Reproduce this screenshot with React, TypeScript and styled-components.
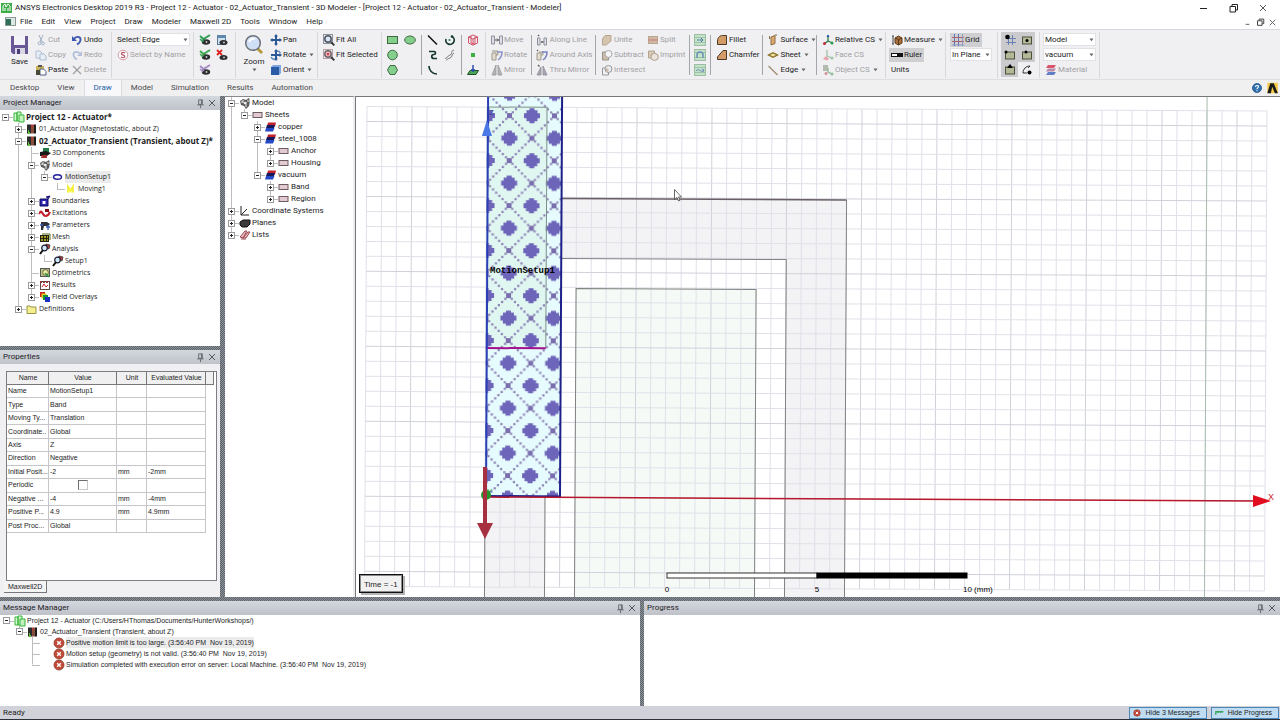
import React from "react";
import styled, { createGlobalStyle, css } from "styled-components";

const ui = `Roboto, "Liberation Sans", sans-serif`;
const classic = `"Liberation Sans", Arial, sans-serif`;
const treeFont = `"Open Sans", "Noto Sans", sans-serif`;

const Global = createGlobalStyle`
  * { box-sizing: border-box; }
  body { margin: 0; background: #fff; color: #1c1c1e; font: 8px/12px ${ui}; }
  button, select, input { font: inherit; color: inherit; margin: 0; }
  button { background: none; border: 0; padding: 0; text-align: left; white-space: nowrap; }
  svg { display: block; flex: none; }
`;

/* ---------- icons, all on a 12 x 12 canvas ---------- */

const grey = "#a0a0a4";
const tan = "#c9b9a6";

const check = (c: string) => (
  <>
    <path d="M1 2l3.500 3L11 1" fill="none" stroke={c} strokeWidth="2" />
    <ellipse cx="7" cy="8" rx="4.200" ry="2.700" fill="#2e2e30" />
    <path d="M1 5l3 3M3.500 5L5 7" stroke={c} strokeWidth="1.200" />
    <circle cx="7.500" cy="8" r=".9" fill="#cfd3d6" />
  </>
);
const snap = (dot: React.ReactNode) => (
  <>
    <rect x="1.5" y="3" width="9" height="7" fill="#b4b896" stroke="#4c4f3c" />
    {dot}
  </>
);
const tile = (inner: React.ReactNode) => (
  <>
    <rect x=".5" y=".5" width="11" height="11" fill="#c3e2c8" stroke="#9cbfa4" />
    <path d="M1 3.500h10M1 8.500h10" stroke="#9dc4a8" strokeWidth="1" />
    {inner}
  </>
);

const icons: Record<string, React.ReactNode> = {
  app: (
    <>
      <rect x="0" y="1" width="11" height="10" fill="#3fae49" />
      <path d="M2 9V4l2-2 1 3 2-3 2 2v5M4 9V6M7 9V6" stroke="#fff" fill="none" />
    </>
  ),
  doc: (
    <>
      <rect x=".5" y="1.500" width="10" height="8" fill="#dfe9e4" stroke="#8a9792" />
      <rect x="1" y="3" width="5" height="6" fill="#2f6e58" />
    </>
  ),
  cut: <path d="M4 1l3 7M8 1L5 8M4.500 8a1.400 1.400 0 1 0 0 2.800 1.400 1.400 0 0 0 0-2.800M8 8a1.400 1.400 0 1 0 0 2.800A1.400 1.400 0 0 0 8 8" stroke="#9fb0c6" fill="none" />,
  copy: (
    <>
      <path d="M1 2h4l2 2v5H1z" fill="#e8eef6" stroke="#aebdd0" />
      <path d="M5 5h4l2 2v4H5z" fill="#e8eef6" stroke="#aebdd0" />
    </>
  ),
  paste: (
    <>
      <rect x="1" y="2" width="8" height="9" fill="#c9b45a" />
      <rect x="3" y="1" width="4" height="2" fill="#555" />
      <path d="M5 5h3.500L11 7.500V11H5z" fill="#fff" stroke="#4d5f80" />
      <rect x="1" y="6" width="4" height="5" fill="#4a4a3a" />
    </>
  ),
  undo: (
    <>
      <path d="M1 2v5h5z" fill="#3c57b0" />
      <path d="M3 5C5 1.500 10 2.500 9.500 6c-.2 2-1.500 3.500-3.500 4.500" fill="none" stroke="#3c57b0" strokeWidth="1.800" />
    </>
  ),
  redo: (
    <>
      <path d="M11 2v5H6z" fill="#b3bfda" />
      <path d="M9 5C7 1.500 2 2.500 2.500 6c.2 2 1.500 3.500 3.500 4.500" fill="none" stroke="#b3bfda" strokeWidth="1.800" />
    </>
  ),
  del: <path d="M2 2l8 8M10 2l-8 8" stroke={grey} strokeWidth="1.300" />,
  byName: (
    <>
      <circle cx="6" cy="6" r="4.800" fill="#fff" stroke="#d49aa4" />
      <path d="M8 4.200C7 3 4.200 3.300 4.400 4.800S8 6 7.800 7.500 5 9 4 7.800" fill="none" stroke="#b85c6c" strokeWidth="1.300" />
    </>
  ),
  chkA: check("#2f9e52"),
  chkB: check("#39a84f"),
  chkC: check("#a68cc4"),
  eyeBox: (
    <>
      <rect x="1.500" y="1.500" width="8" height="9" fill="#cfe0ef" stroke="#5b7894" />
      <rect x="1" y="1" width="9" height="3" fill="#5f86ac" />
      <ellipse cx="7.500" cy="8.500" rx="4" ry="2.500" fill="#2e2e30" />
      <circle cx="8" cy="8.500" r=".9" fill="#cfd3d6" />
    </>
  ),
  eyeX: (
    <>
      <path d="M1 1l5 5M6 1L1 6" stroke="#d22" strokeWidth="1.800" />
      <ellipse cx="7.500" cy="8.500" rx="4" ry="2.500" fill="#2e2e30" />
      <circle cx="8" cy="8.500" r=".9" fill="#cfd3d6" />
    </>
  ),
  pan: <path d="M6 0l2 2.500H7V5h2.500V4L12 6 9.500 8V7H7v2.500h1L6 12 4 9.500h1V7H2.500v1L0 6l2.500-2v1H5V2.500H4z" fill="#2b5896" />,
  rotate3: (
    <>
      <path d="M6 0l2 2.500H7V5h2.500V4L12 6 9.500 8V7H7v2.500h1L6 12 4 9.500h1V7H1V5h4V2.500H4z" fill="#2b5896" />
      <path d="M1 8c1 2 3 2.500 4 2.500M7 2c2 0 3 1 3.500 2" stroke="#5d87bd" strokeWidth="1.400" fill="none" />
    </>
  ),
  orient: (
    <>
      <path d="M1 3l2-2h8v8l-2 2H1z" fill="#7ea6dc" />
      <rect x="1" y="3" width="8" height="8" fill="#2c5ca8" />
    </>
  ),
  fitAll: (
    <>
      <rect x=".5" y=".5" width="9" height="9" fill="none" stroke="#8c929c" />
      <circle cx="5" cy="5" r="3.200" fill="#d8e6f5" stroke="#4b5563" strokeWidth="1.500" />
      <path d="M8 8l3.300 3.300" stroke="#333" strokeWidth="1.800" />
    </>
  ),
  fitSel: (
    <>
      <rect x=".5" y=".5" width="9" height="9" fill="none" stroke="#b9a0a4" />
      <circle cx="5" cy="5" r="3.200" fill="#f6cbd0" stroke="#6f6468" strokeWidth="1.500" />
      <circle cx="5" cy="5" r="1.500" fill="#d04a5c" />
      <path d="M8 8l3.300 3.300" stroke="#333" strokeWidth="1.800" />
    </>
  ),
  rect: <rect x=".500" y="2.500" width="10" height="7" fill="#85cf8c" stroke="#3f6b44" />,
  oval: <ellipse cx="6" cy="6" rx="5.300" ry="4" fill="#85cf8c" stroke="#3f6b44" />,
  circ: <circle cx="5.500" cy="6" r="4.800" fill="#85cf8c" stroke="#3f6b44" />,
  hex: <path d="M3 1.500h5L10.500 6 8 10.500H3L.5 6z" fill="#85cf8c" stroke="#3f6b44" />,
  line: <path d="M1 1.500l9 9" stroke="#111" strokeWidth="1.500" />,
  spin: (
    <>
      <path d="M2 5a4.200 4.200 0 1 0 6-2.500" stroke="#123a2c" strokeWidth="1.700" fill="none" />
      <circle cx="5.500" cy="6" r="1.100" fill="#2f7d5b" />
      <circle cx="8" cy="2.500" r="1.300" fill="#123a2c" />
    </>
  ),
  spline: <path d="M2 2.500h5c2 0 2 3 0 3C4 5.500 4 9.500 7 9.500h3" stroke="#16382e" strokeWidth="1.700" fill="none" />,
  curvePen: <path d="M10 1C6 2 9 5 6 6S4 9 1 9.500M10 4C7 5 9 8 6 9s-3 2-4 2" stroke="#777" fill="none" />,
  arc: <path d="M2 2c0 4 3 8 8 8" stroke="#16382e" strokeWidth="1.700" fill="none" />,
  cube: <path d="M6 1l4.500 2v6L6 11.200 1.500 9V3zM1.500 3L6 5l4.500-2M6 5v6M4 2v7l4 1V2.500" stroke="#d2546a" fill="none" />,
  dot: <rect x="4" y="4" width="4" height="4" fill="#3cae45" />,
  plane: (
    <>
      <path d="M3 6.500h8.500L9 10.500H.500z" fill="#4aa755" stroke="#1e4f26" />
      <path d="M6 1v7M4 6h4" stroke="#2545a8" strokeWidth="1.400" />
    </>
  ),
  move: (
    <>
      <path d="M.5 2v8h3V2zM8.500 2v8h3V2z" fill="#dfe0e6" stroke="#8d8f9c" />
      <path d="M4 6h4M6 4.500L7.500 6 6 7.500" stroke="#555" fill="none" />
    </>
  ),
  rot: (
    <>
      <path d="M1 4v7h4V4zM1 2h6v4H5" fill="#e3dccf" stroke="#a09a90" />
      <path d="M6 3h5c0 4-1 6-4 8" fill="none" stroke="#8c90c6" strokeWidth="1.500" />
    </>
  ),
  mirror: <path d="M5 1v10H1zM7 1l4 10H7z" fill="#b4b4ba" stroke="#97979d" strokeWidth=".8" />,
  along: (
    <>
      <path d="M1.500 4v7h2.500V4zM8 4v7h2.500V4z" fill="#dfe0ea" stroke="#8d8f9a" />
      <path d="M2 1l1 1M5 8h2.500" stroke="#555" strokeWidth="1.300" />
    </>
  ),
  around: (
    <>
      <path d="M1 4v7h4V4zM3 3h4v3H5" fill="#e3dccf" stroke="#a09a90" />
      <path d="M6 3h5c0 4-1 6-4 8" fill="none" stroke="#7a80c2" strokeWidth="1.500" />
      <path d="M1 1l1 1" stroke="#555" strokeWidth="1.300" />
    </>
  ),
  thru: (
    <>
      <path d="M5 3v8H1zM7 2l4 9H7z" fill="#a8a8b2" stroke="#8d8d98" strokeWidth=".8" />
      <path d="M2 1l1.500 1.500" stroke="#555" strokeWidth="1.300" />
    </>
  ),
  unite: <path d="M4 1.500h6V7L7 9.500 5 11H1.500V5z" fill="#d6c5ae" stroke="#b5a58f" />,
  subtract: (
    <>
      <path d="M1.500 3h6v8h-6z" fill="#cfbda7" stroke="#97908a" />
      <circle cx="7.500" cy="5" r="3.500" fill="#f4f4f6" stroke="#a7a7ab" />
    </>
  ),
  intersect: (
    <>
      <path d="M1.500 4h6v7h-6z" fill="#f1f1f3" stroke="#97979b" />
      <circle cx="7.500" cy="5" r="3.500" fill="#eeeef0" stroke="#97979b" />
      <path d="M5 4.500h2.500v3H5z" fill={tan} />
    </>
  ),
  split: (
    <>
      <rect x="1.500" y="2.500" width="9" height="7" fill="#d1b9a0" stroke="#b9a590" />
      <path d="M1 6h10" stroke="#c88f8f" strokeWidth="1.500" />
    </>
  ),
  imprint: (
    <>
      <path d="M1.500 2h6v7h-6z" fill="#d9c9b4" stroke="#b3a694" />
      <path d="M4 6l3.500-2L11 6v4l-3.500 1.500L4 10z" fill="#ebe4da" stroke="#a89d90" />
    </>
  ),
  tileA: tile(<path d="M3 6h6M7 4l2 2-2 2" stroke="#4d79a8" fill="none" />),
  tileB: tile(<path d="M3 9V6a3 3 0 0 1 6 0v3" stroke="#6c8fb8" fill="none" strokeWidth="1.500" />),
  tileC: tile(<path d="M2 7c3-4 5 3 8-1M8 5l2 1-1 2" stroke="#6c8fb8" fill="none" />),
  fillet: <path d="M1.500 10.500V7c0-4 3-5.500 5-5.500h4v9z" fill="#d39c66" stroke="#4b3a2a" />,
  chamfer: <path d="M1.500 10.500V8L7 1.500h3.500v9z" fill="#d39c66" stroke="#4b3a2a" />,
  surface: (
    <>
      <path d="M4 3l4-1.500v8L4 11z" fill="#d9a96f" stroke="#8b6a45" />
      <path d="M2.500 2v3M8 1h2" stroke="#8b6a45" />
    </>
  ),
  sheet: (
    <>
      <path d="M0 6l6-3 6 3-6 3z" fill="#8d7328" />
      <path d="M3 6l3-1.400L9 6 6 7.400z" fill="#efe2a4" />
    </>
  ),
  edge: <path d="M1.500 2l9 9" stroke="#a08a70" strokeWidth="1.200" />,
  cs: (
    <>
      <path d="M6 1v6M6 7L2 10M6 7l4.500 2" stroke="#2b7a48" strokeWidth="1.300" fill="none" />
      <path d="M4.500 3L6 .5 7.500 3z" fill="#2456b8" />
      <circle cx="2.500" cy="9.500" r="1.500" fill="#c52a3a" />
      <circle cx="10" cy="9" r="1.500" fill="#2c9a49" />
    </>
  ),
  faceCs: (
    <>
      <path d="M5 1v6M5 7l5 2" stroke="#9dbfa6" strokeWidth="1.300" fill="none" />
      <path d="M1 10l3-3 3 3-2 1.500z" fill="#e5a2a8" />
      <circle cx="10" cy="9" r="1.500" fill="#9dc5a8" />
    </>
  ),
  objCs: (
    <>
      <rect x="1" y="1" width="5" height="6" fill="#b4bcae" />
      <path d="M6 4v4l4 2" stroke="#8fb99a" strokeWidth="1.300" fill="none" />
      <circle cx="4" cy="9.500" r="1.500" fill="#d98f98" />
      <circle cx="10" cy="10" r="1.500" fill="#8fbf9c" />
    </>
  ),
  measure: (
    <>
      <path d="M1 2h2M1 10h2M2 2v8" stroke="#444" />
      <path d="M4 4l3.500-2L11 4v5l-3.500 2L4 9z" fill="#a9713c" stroke="#5a3a1d" />
      <path d="M4 4l3.500 1.500L11 4M7.500 5.500V11" stroke="#5a3a1d" fill="none" />
    </>
  ),
  ruler: (
    <>
      <rect x=".500" y="4.500" width="11" height="3" fill="#fff" stroke="#111" />
      <rect x="6" y="4" width="6" height="4" fill="#111" />
    </>
  ),
  grid: (
    <>
      <path d="M2.500 0v12M6.500 0v12" stroke="#5a76b8" />
      <path d="M0 3.500h12M0 7.500h12" stroke="#b0616c" />
      <path d="M10.500 0v12M0 11h12" stroke="#8190c4" strokeWidth=".8" />
    </>
  ),
  snapGrid: (
    <>
      <path d="M4.500 1v10M8.500 1v10M2 4.500h10M2 8.500h10" stroke="#6b7fb5" />
      <circle cx="3.500" cy="3" r="2.300" fill="#000" />
    </>
  ),
  snapMid: snap(<circle cx="6" cy="6.500" r="1.500" fill="#000" />),
  snapVertex: snap(<circle cx="2" cy="3" r="1.500" fill="#000" />),
  snapEdge: snap(<circle cx="5" cy="3" r="1.500" fill="#000" />),
  snapFace: snap(<path d="M6 0l3 4H3z" fill="#000" />),
  snapArc: (
    <>
      <path d="M2 9c0-4 3-7 7-7L7 4M2 9h4" fill="none" stroke="#333" />
      <circle cx="8.500" cy="8.500" r="2" fill="#000" />
    </>
  ),
  material: (
    <>
      <path d="M3 1h8L9 4H1z" fill="#d9566a" />
      <path d="M3 4.500h8l-2 3H1z" fill="#b98aa8" />
      <path d="M3 8h8l-2 3H1z" fill="#5f7fc9" />
    </>
  ),
  project: (
    <>
      <path d="M1 2h3v8H1zM4 1h4v9H4z" fill="#d5f7cf" stroke="#35b43b" />
      <path d="M6 4h5v7H6z" fill="#c4f2bf" stroke="#35b43b" />
    </>
  ),
  design: (
    <>
      <rect x="1" y="1.500" width="4" height="9" fill="#2c2c2c" />
      <rect x="5" y="1.500" width="3" height="9" fill="#8a4f3c" />
      <rect x="8" y="1.500" width="2" height="9" fill="#1c1c1c" />
      <path d="M2 8h1M2 10h2" stroke="#59c43c" strokeWidth="2" />
      <path d="M5 3h2" stroke="#c33" strokeWidth="1.500" />
    </>
  ),
  components: (
    <>
      <path d="M4 1h6v4H4z" fill="#1e7a48" />
      <path d="M1 5l6-1 5 2-4 3H1z" fill="#1a1a1a" />
      <path d="M3 8h5v3H2z" fill="#a13030" />
    </>
  ),
  gear: (
    <>
      <path d="M1 4l3-2 3 1 3-2 1 3-1 5-3 3-2-3-3-1z" fill="#5c5c5c" />
      <path d="M4 3v3M7 5v5M2 5h2M8 4h3" stroke="#eee" />
      <circle cx="6" cy="6" r="1.300" fill="#eee" />
    </>
  ),
  motion: <ellipse cx="5.500" cy="6" rx="4" ry="2.300" fill="#fff" stroke="#1f1f9a" strokeWidth="1.400" />,
  moving: <path d="M3 9.500V3.500l2.500 4L8 3.500v6" fill="#ffff70" stroke="#f4f03c" strokeWidth="1.800" />,
  boundary: (
    <>
      <path d="M1 4h8v7H1zM9 4l2-3-4 1" fill="#2b22b0" stroke="#120c60" />
      <rect x="3.500" y="6" width="3" height="3" fill="#fff" />
    </>
  ),
  excite: (
    <>
      <path d="M0 7c2-4 3-2 4 0s4 4 7-2" fill="none" stroke="#c4202e" strokeWidth="2.200" />
      <path d="M6 2h4v3H6z" fill="#7a1018" />
    </>
  ),
  params: (
    <>
      <path d="M2 3h6l3 2-2 2H5L4 11H2z" fill="#30323a" />
      <path d="M1 6h3M7 8h4M9 6v5" stroke="#3a5fb8" strokeWidth="1.300" />
    </>
  ),
  mesh: (
    <>
      <rect x="1" y="4" width="9" height="7" fill="#22230e" />
      <path d="M2 6h7M2 9h7" stroke="#d4c92a" strokeWidth="1.500" strokeDasharray="2 1" />
      <path d="M3 3h8v6" stroke="#556b1a" fill="none" />
    </>
  ),
  analysis: (
    <>
      <path d="M7 1l4 1-1 4-4-2z" fill="#b43c3c" stroke="#333" strokeWidth=".8" />
      <circle cx="5.500" cy="5" r="2.800" fill="#cfe8f5" stroke="#1c1c2e" strokeWidth="1.200" />
      <path d="M4 7l-3 4" stroke="#111" strokeWidth="2" />
    </>
  ),
  optim: (
    <>
      <rect x="1.500" y="1.500" width="9" height="8" fill="#b8c27a" stroke="#555" />
      <circle cx="6.500" cy="5.500" r="2.800" fill="#f3f0a0" stroke="#665" />
      <path d="M6 6l4 4" stroke="#2b8f45" strokeWidth="1.500" />
    </>
  ),
  results: (
    <>
      <rect x="1.500" y="2.500" width="9" height="8" fill="#fff" stroke="#5f4a4a" />
      <path d="M1 3h10" stroke="#8f3a3a" strokeWidth="2" strokeDasharray="2 1" />
      <path d="M3 8l2-3 2 3 2-2" stroke="#c22" fill="none" />
    </>
  ),
  overlays: (
    <>
      <rect x="1" y="1" width="5" height="5" fill="#c22" />
      <rect x="2.500" y="2.500" width="5" height="5" fill="#e0d020" />
      <rect x="4" y="4" width="5" height="5" fill="#18923a" />
      <rect x="6" y="6" width="5" height="5" fill="#1c2ec0" />
    </>
  ),
  folder: <path d="M1 3h3l1 1h5v6.500H1z" fill="#f3ee8e" stroke="#9a9446" />,
  sheetItem: <rect x="1" y="3.500" width="9" height="5" fill="#e3c9d0" stroke="#6b5a60" />,
  matItem: (
    <>
      <path d="M3 1.500h8l-1 4H2z" fill="#c3202e" />
      <path d="M2 4h8l-1 3H1z" fill="#16185c" />
      <path d="M1 7h8.500L8 10.500H0z" fill="#2448c8" />
    </>
  ),
  csItem: <path d="M2 1v9h8M2 10l6-6" stroke="#222" fill="none" />,
  planes: <path d="M1 5l3-2h7v4L8 10H3L1 8z" fill="#3c3c3c" stroke="#111" />,
  lists: <path d="M1 8l5-6 2 0-4 7zM4 9l5-6h2L7 9zM2 10h5" fill="#edb8be" stroke="#9b4a55" />,
  error: (
    <>
      <circle cx="6" cy="6" r="5" fill="#c24a38" stroke="#8e3a2c" strokeWidth=".8" />
      <path d="M4.200 4.200l3.600 3.600M7.800 4.200L4.200 7.800" stroke="#fff" strokeWidth="1.400" />
    </>
  ),
  progress: <path d="M1 8V4.500h9M4 4v2M7 4v2" fill="none" stroke="#3aa655" strokeWidth="1.600" />,
  help: (
    <>
      <circle cx="6" cy="6" r="4.500" fill="#2f72b0" stroke="#1f4f80" strokeWidth=".8" />
      <path d="M4.500 5c0-2 3-2 3-.3C7.500 6 6 5.800 6 7.200M6 8.200v1" stroke="#fff" fill="none" strokeWidth="1.100" />
    </>
  ),
  ansys: (
    <>
      <rect x="2" y="1.500" width="9" height="9" fill="#f7c948" />
      <path d="M4.500 2h3l3.500 8.500H8.500L6.200 5l-1.200 5.500H2z" fill="#1b1b1b" />
    </>
  ),
  pin: <path d="M4 2h4v5H4zM7 2v5M2.500 7.500h7M6 8v3" fill="none" stroke="#62666c" />,
  close: <path d="M3 3l6 6M9 3l-6 6" stroke="#55595f" />,
  min: <path d="M3 6.500h7" stroke="#222" />,
  restore: <path d="M3 4.500h5.500V10H3zM5 4V2.500h5.500V8H9" fill="none" stroke="#222" />,
  minSmall: <path d="M4 8h4" stroke="#555" />,
};

const Icon = ({ name, size = 12 }: { name: string; size?: number }) => (
  <svg width={size} height={size} viewBox="0 0 12 12" aria-hidden="true">
    {icons[name]}
  </svg>
);

const Caret = () => (
  <svg width="5" height="4" viewBox="0 0 5 4" aria-hidden="true">
    <path d="M.5.5h4L2.500 3.200z" fill="#666" />
  </svg>
);

/* ---------- window chrome ---------- */

const Window = styled.div`
  display: flex;
  flex-direction: column;
  min-height: 100vh;
  background: #fff;
  overflow: hidden;
`;

const TitleBar = styled.header`
  display: flex;
  align-items: center;
  height: 15px;
  padding: 0 11px 0 1px;
  gap: 2px;
  h1 { flex: 1; margin: 0; font-size: 8px; font-weight: 400; white-space: nowrap; color: #222; }
`;

const WindowButtons = styled.div<{ $gap: number }>`
  display: flex;
  gap: ${(p) => p.$gap}px;
`;

const MenuBar = styled.nav`
  display: flex;
  align-items: center;
  height: 14px;
  padding: 0 2px 0 5px;
  ul { display: flex; flex: 1; gap: 9px; margin: 0 0 0 3px; padding: 0; list-style: none; }
`;

const Ribbon = styled.section`
  display: flex;
  height: 51px;
  padding-top: 2px;
  background: #f0f0f2;
  border-top: 1px solid #d9d9dd;
  border-bottom: 1px solid #dedee1;
`;

const Group = styled.div<{ $w: number; $pad: number }>`
  display: flex;
  flex: none;
  width: ${(p) => p.$w}px;
  height: 46px;
  padding-left: ${(p) => p.$pad}px;
  border-right: 1px solid #d8d8dc;
`;

const Column = styled.div<{ $w?: number }>`
  display: grid;
  flex: none;
  grid-template-rows: repeat(3, 15px);
  align-items: center;
  justify-items: start;
  width: ${(p) => (p.$w ? `${p.$w}px` : "auto")};
`;

const Rule = styled.i`
  width: 1px;
  height: 40px;
  margin: 3px 5px 0 0;
  background: #a5a5ac;
`;

const ToolButton = styled.button<{ $active?: boolean }>`
  display: flex;
  align-items: center;
  gap: 1px;
  height: 14px;
  margin-left: -2px;
  padding: 0 2px;
  line-height: 14px;
  background: ${(p) => (p.$active ? "#cfcfd1" : "none")};
  &:disabled { color: ${grey}; }
  & > span + svg { margin-left: 2px; }
`;

const BigTool = styled.button<{ $w: number }>`
  display: flex;
  flex: none;
  flex-direction: column;
  align-items: center;
  width: ${(p) => p.$w}px;
  padding-top: 2px;
`;

const Field = styled.div`
  display: flex;
  align-items: center;
  label { width: 23px; }
`;

const Picker = styled.span<{ $w: number; $shift?: boolean }>`
  position: relative;
  display: block;
  width: ${(p) => p.$w}px;
  margin-left: ${(p) => (p.$shift ? "-2px" : "0")};
  select {
    appearance: none;
    display: block;
    width: 100%;
    height: 13px;
    padding: 0 1px;
    border: 1px solid #e2e2e6;
    border-radius: 0;
    background: #fff;
    line-height: 11px;
  }
  svg { position: absolute; right: 2px; top: 5px; pointer-events: none; }
`;

const SnapGrid = styled.div`
  display: grid;
  grid-template: repeat(3, 15px) / repeat(2, 17px);
`;

const SnapButton = styled.button<{ $active: boolean }>`
  display: grid;
  place-items: center;
  background: ${(p) => (p.$active ? "#cbcbcd" : "none")};
`;

const TabStrip = styled.div`
  display: flex;
  align-items: center;
  height: 16px;
  padding: 0 1px;
  background: #f0f0f1;
`;

const TabStripEnd = styled.div`
  display: flex;
  align-items: center;
  gap: 2px;
  margin-left: auto;
`;

const RibbonTab = styled.button<{ $active?: boolean }>`
  height: 16px;
  padding: 0 9px;
  color: #4a4a4e;
  border: 0 solid #dcdce0;
  ${(p) => p.$active && css`background: #f8f8fb; color: #1c62a5; border-width: 0 1px;`}
`;

const Filler = styled.span`
  flex: 1;
`;

const texture = css`
  background: repeating-conic-gradient(#5f656c 0 25%, #8b9097 0 50%) 0 0 / 2px 2px;
`;

const HSplit = styled.div`
  ${texture}
  flex: none;
  height: 4px;
`;

const VSplit = styled.div<{ $w: number }>`
  ${texture}
  flex: none;
  width: ${(p) => p.$w}px;
`;

const Work = styled.main`
  display: flex;
  flex: 1 0 501px;
  min-height: 0;
`;

const Dock = styled.div`
  display: flex;
  flex: none;
  flex-direction: column;
  width: 220px;
`;

const Panel = styled.section<{ $h?: number; $bg?: string }>`
  display: flex;
  flex: ${(p) => (p.$h ? `0 0 ${p.$h}px` : "1")};
  flex-direction: column;
  min-width: 0;
  background: ${(p) => p.$bg ?? "#fff"};
`;

const PanelTitle = styled.div`
  display: flex;
  align-items: center;
  flex: none;
  height: 14px;
  padding: 0 2px 0 3px;
  background: linear-gradient(#d3d7de, #bfc3c9);
  h2 { flex: 1; margin: 0; font-size: 8px; font-weight: 400; color: #1f2226; }
`;

/* ---------- trees ---------- */

type Node = {
  label: string;
  icon: string;
  open?: boolean;
  bold?: boolean;
  marked?: boolean;
  kids?: Node[];
};

const TreeBox = styled.div<{ $font: string; $size: number; $pad: string }>`
  padding: ${(p) => p.$pad};
  font-family: ${(p) => p.$font};
  font-size: ${(p) => p.$size}px;
`;

const TreeRow = styled.div<{ $h: number }>`
  display: flex;
  align-items: center;
  height: ${(p) => p.$h}px;
  line-height: ${(p) => p.$h}px;
`;

const ink = "linear-gradient(#bdbdc0, #bdbdc0)";
const Guide = styled.span<{ $kind: "none" | "full" | "half" | "pass" | "tick" }>`
  display: flex;
  align-items: center;
  flex: none;
  width: 13px;
  height: 100%;
  padding-left: 2px;
  background-repeat: no-repeat;
  ${({ $kind }) =>
    $kind === "pass"
      ? css`background-image: ${ink}; background-size: 1px 100%; background-position: 5px 0;`
      : $kind === "tick"
        ? css`background-image: ${ink}; background-size: 8px 1px; background-position: 5px 6px;`
        : $kind === "none"
          ? ""
          : css`
              background-image: ${ink}, ${ink};
              background-size: 1px ${$kind === "full" ? "100%" : "50%"}, 8px 1px;
              background-position: 5px 0, 5px 6px;
            `}
`;

const Expander = styled.button`
  width: 7px;
  height: 7px;
  background: #fff;
`;

const TreeLabel = styled.span<{ $bold?: boolean; $marked?: boolean }>`
  margin-left: 1px;
  white-space: pre;
  ${(p) => p.$bold && css`font-size: 8px; font-weight: 700;`}
  background: ${(p) => (p.$marked ? "#ebebec" : "none")};
`;

const Branch = ({ nodes, trail, rowHeight }: { nodes: Node[]; trail: boolean[]; rowHeight: number }) => (
  <>
    {nodes.map((n, i) => {
      const last = i === nodes.length - 1;
      const solo = trail.length === 0 && nodes.length === 1;
      return (
        <React.Fragment key={n.label}>
          <TreeRow $h={rowHeight} role="treeitem">
            {trail.map((on, k) => (
              <Guide key={k} $kind={on ? "pass" : "none"} />
            ))}
            <Guide $kind={solo ? "tick" : last ? "half" : "full"}>
              {n.open !== undefined && (
                <Expander aria-label={n.open ? "Collapse" : "Expand"}>
                  <svg width="7" height="7" viewBox="0 0 7 7">
                    <rect x=".5" y=".5" width="6" height="6" fill="#fff" stroke="#9a9a9e" />
                    <path d={n.open ? "M2 3.500h3" : "M2 3.500h3M3.500 2v3"} stroke="#222" />
                  </svg>
                </Expander>
              )}
            </Guide>
            {n.icon === "error" && <Guide $kind="none" />}
            <Icon name={n.icon} />
            <TreeLabel $bold={n.bold} $marked={n.marked}>{n.label}</TreeLabel>
          </TreeRow>
          {n.open && n.kids && (
            <Branch nodes={n.kids} trail={[...trail, !last]} rowHeight={rowHeight} />
          )}
        </React.Fragment>
      );
    })}
  </>
);

const project: Node[] = [
  {
    label: "Project 12 - Actuator*", icon: "project", open: true, bold: true,
    kids: [
      { label: "01_Actuator (Magnetostatic, about Z)", icon: "design", open: false },
      {
        label: "02_Actuator_Transient (Transient, about Z)*", icon: "design", open: true, bold: true,
        kids: [
          { label: "3D Components", icon: "components" },
          {
            label: "Model", icon: "gear", open: true,
            kids: [{
              label: "MotionSetup1", icon: "motion", open: true, marked: true,
              kids: [{ label: "Moving1", icon: "moving" }],
            }],
          },
          { label: "Boundaries", icon: "boundary", open: false },
          { label: "Excitations", icon: "excite", open: false },
          { label: "Parameters", icon: "params", open: false },
          { label: "Mesh", icon: "mesh", open: false },
          { label: "Analysis", icon: "analysis", open: true, kids: [{ label: "Setup1", icon: "analysis" }] },
          { label: "Optimetrics", icon: "optim" },
          { label: "Results", icon: "results", open: false },
          { label: "Field Overlays", icon: "overlays", open: false },
        ],
      },
      { label: "Definitions", icon: "folder", open: false },
    ],
  },
];

const model: Node[] = [
  {
    label: "Model", icon: "gear", open: true,
    kids: [{
      label: "Sheets", icon: "sheetItem", open: true,
      kids: [
        { label: "copper", icon: "matItem", open: false },
        {
          label: "steel_1008", icon: "matItem", open: true,
          kids: [
            { label: "Anchor", icon: "sheetItem", open: false },
            { label: "Housing", icon: "sheetItem", open: false },
          ],
        },
        {
          label: "vacuum", icon: "matItem", open: true,
          kids: [
            { label: "Band", icon: "sheetItem", open: false },
            { label: "Region", icon: "sheetItem", open: false },
          ],
        },
      ],
    }],
  },
  { label: "Coordinate Systems", icon: "csItem", open: false },
  { label: "Planes", icon: "planes", open: false },
  { label: "Lists", icon: "lists", open: false },
];

const messages: Node[] = [
  {
    label: "Project 12 - Actuator (C:/Users/HThomas/Documents/HunterWorkshops/)", icon: "project", open: true,
    kids: [{
      label: "02_Actuator_Transient (Transient, about Z)", icon: "design", open: true,
      kids: [
        { label: "Positive motion limit is too large. (3:56:40 PM  Nov 19, 2019)", icon: "error", marked: true },
        { label: "Motion setup (geometry) is not valid. (3:56:40 PM  Nov 19, 2019)", icon: "error" },
        { label: "Simulation completed with execution error on server: Local Machine. (3:56:40 PM  Nov 19, 2019)", icon: "error" },
      ],
    }],
  },
];

const ModelTree = styled.aside`
  flex: none;
  width: 130px;
  border-top: 1px solid #8a8a8e;
  border-right: 2px solid #ececef;
`;

/* ---------- properties ---------- */

const PropertyFrame = styled.div`
  display: flex;
  flex: 1;
  flex-direction: column;
  align-items: flex-start;
  padding: 7px 3px 4px 4px;
`;

const PropertySheet = styled.div`
  flex: 1;
  align-self: stretch;
  margin-left: 2px;
  padding-right: 2px;
  background: #fff;
  border: 1px solid #7d7d81;
`;

const PropertyTable = styled.table`
  width: 207px;
  height: 161px;
  table-layout: fixed;
  border-collapse: separate;
  border-spacing: 0;
  font: 7px/12px ${classic};
  th, td {
    padding: 0 0 0 1px;
    white-space: nowrap;
    text-align: left;
    border: 0 solid #c6c6ca;
    border-width: 0 1px 1px 0;
  }
  th {
    height: 13px;
    font-weight: 400;
    text-align: center;
    background: #f0f0f0;
    border-color: #77777b;
  }
  td:last-child { border: 0; }
`;

const Tick = styled.input`
  appearance: none;
  display: block;
  width: 10px;
  height: 10px;
  margin: 0 auto;
  border: 1px solid #c9c9cc;
  border-top-color: #6e6e72;
  border-left-color: #6e6e72;
  background: #fff;
`;

const SheetTab = styled.button`
  height: 12px;
  padding: 0 4px;
  font: 7px/11px ${classic};
  border: 1px solid #77777b;
  border-width: 0 1px 1px 0;
  background: #f4f4f5;
`;

const properties: [string, string, string, string][] = [
  ["Name", "MotionSetup1", "", ""],
  ["Type", "Band", "", ""],
  ["Moving Ty...", "Translation", "", ""],
  ["Coordinate..", "Global", "", ""],
  ["Axis", "Z", "", ""],
  ["Direction", "Negative", "", ""],
  ["Initial Posit...", "-2", "mm", "-2mm"],
  ["Periodic", "", "", ""],
  ["Negative ...", "-4", "mm", "-4mm"],
  ["Positive P...", "4.9", "mm", "4.9mm"],
  ["Post Proc...", "Global", "", ""],
];

/* ---------- modeler view ---------- */

const View = styled.section`
  position: relative;
  flex: 1;
  min-width: 0;
  border-top: 1px solid #77777b;
  border-left: 1px solid #77777b;
  overflow: hidden;
  & > svg { position: absolute; inset: 0; width: 100%; height: 100%; }
`;

const TimeBox = styled.div`
  position: absolute;
  left: 3px;
  bottom: 4px;
  padding: 3px 4px 1px;
  font: 8px/13px ${classic};
  background: #f1f1f1;
  border: 1px solid #111;
  box-shadow: 0 0 0 1px #8a8a8a inset, 2px 2px 0 #b5b5b8;
`;

const CELL = 15;
const columns = Array.from({ length: 61 }, (_, i) => (i - 8) * CELL);
const rows = Array.from({ length: 33 }, (_, i) => (i - 26) * CELL);
const lineColor = (v: number) => (v % 75 === 0 ? "#d0d2da" : "#e0e1e9");

const Blob = ({ x, y }: { x: number; y: number }) => (
  <path
    transform={`translate(${x} ${y})`}
    d="M-2.500-7.500h5v2h3v3h2.500v5h-2.500v3h-3v2h-5v-2h-3v-3h-2.500v-5h2.500v-3h3z"
    fill="#6d65b9"
  />
);

const steps = [1, 2, 3, 4, 5, 6];

const Scene = () => (
  <svg role="img" aria-label="Actuator cross section">
    <defs>
      <pattern id="stipple" width="45" height="45" y="1" patternUnits="userSpaceOnUse">
        {steps.flatMap((s) => {
          const t = s * 3.2;
          return [[t, t], [22.5 + t, 22.5 + t], [45 - t, t], [22.5 - t, 22.5 + t]].map(([x, y]) => (
            <rect key={`${x}-${y}`} x={x - 1.1} y={y - 1.1} width="2.2" height="2.2" fill="#8c82b6" />
          ));
        })}
        {[[0, 0], [45, 0], [0, 45], [45, 45], [22.5, 22.5]].map(([x, y]) => (
          <rect key={`${x}-${y}`} x={x - 2.5} y={y - 2.5} width="5" height="5" fill="#7a6eae" />
        ))}
        <Blob x={22.5} y={0} />
        <Blob x={22.5} y={45} />
        <Blob x={0} y={22.5} />
        <Blob x={45} y={22.5} />
      </pattern>
    </defs>
    <g transform="translate(129 400) rotate(.3)">
      <path d="M75-299H360V120H300V-239H75z" fill="#f3f2f5" />
      <path d="M0 0H60V120H0z" fill="#f3f2f4" />
      <path d="M90-209H270V120H90z" fill="#f5faf6" />
      {columns.map((x) => (
        <line key={x} x1={x} x2={x} y1={-390} y2={90} stroke={lineColor(x)} />
      ))}
      {rows.map((y) => (
        <line key={y} y1={y} y2={y} x1={-120} x2={780} stroke={lineColor(y)} />
      ))}
      <path d="M720-420V120" stroke="#a9bcae" />
      <g fill="none" stroke="#828282">
        <path d="M75-239H300V120M360 120V-299M0 0V120M60 0V120" />
        <path d="M90 120V-209H270V120" />
        <path d="M75-299H360" stroke="#6a5f66" strokeWidth="1.500" />
      </g>
      <rect x="0" y="-420" width="75" height="420" fill="#e6fbfd" />
      <rect x="0" y="-390" width="60" height="241" fill="#e0f6f1" />
      <rect x="0" y="-420" width="75" height="420" fill="url(#stipple)" />
      <path d="M0-390H60V-150" fill="none" stroke="#7d8f88" />
      <path d="M0-149H60" stroke="#a3108f" strokeWidth="2" />
      <path d="M75-420V-1H0" fill="none" stroke="#1d2089" strokeWidth="2" />
      <path d="M1-420V0" stroke="#2b3fb4" strokeWidth="2" />
      <path d="M-1 0H775" stroke="#b8182c" strokeWidth="1.500" />
      <path d="M768-6l18 6-18 6z" fill="#e30d20" />
      <path d="M-5-361l5-16 5 16z" fill="#4a78e6" />
    </g>
    <circle cx="130" cy="398" r="5" fill="#259a2a" />
    <path d="M127 370h4v56h6l-8 16-8-16h6z" fill="#a62f40" />
    <g fontFamily={classic} fontSize="8">
      <text x="133" y="18" fill="#33489a">Z</text>
      <text x="131" y="397" fill="#1f8a25">Y</text>
      <text x="912" y="403" fill="#d0182a" fontSize="9">X</text>
      <text x="311" y="495" textAnchor="middle">0</text>
      <text x="461" y="495" textAnchor="middle">5</text>
      <text x="607" y="495">10 (mm)</text>
    </g>
    <text x="134" y="176" fontFamily={`"Liberation Mono", monospace`} fontWeight="700" fontSize="9">MotionSetup1</text>
    <rect x="311" y="476" width="150" height="5" fill="#fff" stroke="#333" />
    <rect x="461" y="476" width="150" height="5" fill="#000" stroke="#000" />
    <path d="M318.500 92.500v10l2.500-2 1.500 3.500 1.500-.7-1.500-3.300h3z" fill="#fff" stroke="#444" strokeWidth=".8" />
  </svg>
);

/* ---------- bottom ---------- */

const Bottom = styled.section`
  display: flex;
  flex: none;
  height: 105px;
`;

const MessagePane = styled.div`
  display: flex;
  flex-direction: column;
  width: 50%;
`;

const StatusBar = styled.footer`
  display: flex;
  align-items: center;
  flex: none;
  height: 14px;
  gap: 4px;
  padding: 0 1px 0 3px;
  background: #d0d1d9;
  border-bottom: 1px solid #2c3038;
`;

const StatusButton = styled.button<{ $gap: number }>`
  display: flex;
  align-items: center;
  gap: ${(p) => p.$gap}px;
  height: 12px;
  padding: 0 6px 0 3px;
  font: 7px/10px ${classic};
  background: #bfdcf2;
  border: 1px solid #4b86b4;
`;

/* ---------- composition ---------- */

type ToolProps = { icon?: string; label?: string; off?: boolean; menu?: boolean; active?: boolean };
const Tool = ({ icon, label, off, menu, active }: ToolProps) => (
  <ToolButton disabled={off} $active={active} aria-label={label ?? icon}>
    {icon && <Icon name={icon} />}
    {label && <span>{label}</span>}
    {menu && <Caret />}
  </ToolButton>
);

const Tools = ({ w, items }: { w?: number; items: ToolProps[] }) => (
  <Column $w={w}>
    {items.map((t, i) => <Tool key={i} {...t} />)}
  </Column>
);

const Choice = ({ id, w, value, label, shift }: { id: string; w: number; value: string; label?: string; shift?: boolean }) => (
  <Picker $w={w} $shift={shift}>
    <select id={id} defaultValue={value} aria-label={label}>
      <option>{value}</option>
    </select>
    <Caret />
  </Picker>
);

const Title = ({ children }: { children: string }) => (
  <PanelTitle>
    <h2>{children}</h2>
    <button aria-label="Auto hide"><Icon name="pin" size={11} /></button>
    <button aria-label="Close panel"><Icon name="close" /></button>
  </PanelTitle>
);

const menus = ["File", "Edit", "View", "Project", "Draw", "Modeler", "Maxwell 2D", "Tools", "Window", "Help"];
const tabs = ["Desktop", "View", "Draw", "Model", "Simulation", "Results", "Automation"];
const snaps: [string, boolean][] = [
  ["snapGrid", true], ["snapMid", true], ["snapVertex", true],
  ["snapEdge", true], ["snapFace", true], ["snapArc", false],
];

export default function App() {
  return (
    <Window>
      <Global />
      <TitleBar>
        <Icon name="app" />
        <h1>ANSYS Electronics Desktop 2019 R3 - Project 12 - Actuator - 02_Actuator_Transient - 3D Modeler - [Project 12 - Actuator - 02_Actuator_Transient - Modeler]</h1>
        <WindowButtons $gap={18}>
          <button aria-label="Minimize"><Icon name="min" /></button>
          <button aria-label="Restore"><Icon name="restore" /></button>
          <button aria-label="Close"><Icon name="close" /></button>
        </WindowButtons>
      </TitleBar>
      <MenuBar>
        <Icon name="doc" />
        <ul>{menus.map((m) => <li key={m}><button>{m}</button></li>)}</ul>
        <WindowButtons $gap={2}>
          <button aria-label="Minimize document"><Icon name="minSmall" size={11} /></button>
          <button aria-label="Restore document"><Icon name="restore" size={10} /></button>
          <button aria-label="Close document"><Icon name="close" size={11} /></button>
        </WindowButtons>
      </MenuBar>

      <Ribbon>
        <Group $w={112} $pad={4}>
          <BigTool $w={31}>
            <svg width="20" height="22" viewBox="0 0 20 22" aria-hidden="true">
              <path d="M1 2h17v18H3l-2-2z" fill="#6a5796" />
              <rect x="4" y="2" width="11" height="9" fill="#f4f3f8" />
              <rect x="5" y="14" width="10" height="6" fill="#d9d6e4" />
              <rect x="7" y="15" width="3" height="5" fill="#4c3c78" />
            </svg>
            <span>Save</span>
          </BigTool>
          <Tools w={36} items={[{ icon: "cut", label: "Cut", off: true }, { icon: "copy", label: "Copy", off: true }, { icon: "paste", label: "Paste" }]} />
          <Tools items={[{ icon: "undo", label: "Undo" }, { icon: "redo", label: "Redo", off: true }, { icon: "del", label: "Delete", off: true }]} />
        </Group>
        <Group $w={82} $pad={5}>
          <Column>
            <Field>
              <label htmlFor="pick">Select:</label>
              <Choice id="pick" w={50} value="Edge" />
            </Field>
            <Tool icon="byName" label="Select by Name" off />
          </Column>
        </Group>
        <Group $w={42} $pad={5}>
          <Tools w={17} items={[{ icon: "chkA" }, { icon: "chkB" }, { icon: "chkC" }]} />
          <Tools items={[{ icon: "eyeBox" }, { icon: "eyeX" }]} />
        </Group>
        <Group $w={82} $pad={2}>
          <BigTool $w={32}>
            <svg width="20" height="22" viewBox="0 0 20 22" aria-hidden="true">
              <path d="M13 14l5 5" stroke="#b79a3c" strokeWidth="3" />
              <circle cx="9" cy="9" r="7.300" fill="#cfe0f6" stroke="#6b7078" strokeWidth="1.500" />
              <path d="M5 8c1-3 4-4 6-3" stroke="#fff" strokeWidth="2" fill="none" />
            </svg>
            <span>Zoom</span>
            <Caret />
          </BigTool>
          <Tools items={[{ icon: "pan", label: "Pan" }, { icon: "rotate3", label: "Rotate", menu: true }, { icon: "orient", label: "Orient", menu: true }]} />
        </Group>
        <Group $w={64} $pad={5}>
          <Tools items={[{ icon: "fitAll", label: "Fit All" }, { icon: "fitSel", label: "Fit Selected" }]} />
        </Group>
        <Group $w={104} $pad={5}>
          <Tools w={17} items={[{ icon: "rect" }, { icon: "circ" }, { icon: "hex" }]} />
          <Tools w={17} items={[{ icon: "oval" }]} />
          <Rule />
          <Tools w={17} items={[{ icon: "line" }, { icon: "spline" }, { icon: "arc" }]} />
          <Tools w={17} items={[{ icon: "spin" }, { icon: "curvePen" }]} />
          <Rule />
          <Tools items={[{ icon: "cube" }, { icon: "dot" }, { icon: "plane" }]} />
        </Group>
        <Group $w={400} $pad={5}>
          <Tools w={40} items={[{ icon: "move", label: "Move", off: true }, { icon: "rot", label: "Rotate", off: true }, { icon: "mirror", label: "Mirror", off: true }]} />
          <Rule />
          <Tools w={59} items={[{ icon: "along", label: "Along Line", off: true }, { icon: "around", label: "Around Axis", off: true }, { icon: "thru", label: "Thru Mirror", off: true }]} />
          <Rule />
          <Tools w={46} items={[{ icon: "unite", label: "Unite", off: true }, { icon: "subtract", label: "Subtract", off: true }, { icon: "intersect", label: "Intersect", off: true }]} />
          <Tools w={42} items={[{ icon: "split", label: "Split", off: true }, { icon: "imprint", label: "Imprint", off: true }]} />
          <Rule />
          <Tools w={16} items={[{ icon: "tileA" }, { icon: "tileB" }, { icon: "tileC" }]} />
          <Rule />
          <Tools w={46} items={[{ icon: "fillet", label: "Fillet" }, { icon: "chamfer", label: "Chamfer" }]} />
          <Rule />
          <Tools w={49} items={[{ icon: "surface", label: "Surface", menu: true }, { icon: "sheet", label: "Sheet", menu: true }, { icon: "edge", label: "Edge", menu: true }]} />
          <Rule />
          <Tools items={[{ icon: "cs", label: "Relative CS", menu: true }, { icon: "faceCs", label: "Face CS", off: true }, { icon: "objCs", label: "Object CS", off: true, menu: true }]} />
        </Group>
        <Group $w={60} $pad={5}>
          <Tools items={[{ icon: "measure", label: "Measure", menu: true }, { icon: "ruler", label: "Ruler", active: true }, { label: "Units" }]} />
        </Group>
        <Group $w={52} $pad={6}>
          <Column>
            <Tool icon="grid" label="Grid" active />
            <Choice id="planeMode" w={42} value="In Plane" label="Movement mode" shift />
          </Column>
        </Group>
        <Group $w={42} $pad={3}>
          <SnapGrid>
            {snaps.map(([name, on]) => (
              <SnapButton key={name} $active={on} aria-label={name}><Icon name={name} /></SnapButton>
            ))}
          </SnapGrid>
        </Group>
        <Group $w={60} $pad={5}>
          <Column>
            <Choice id="kind" w={53} value="Model" label="Object kind" shift />
            <Choice id="material" w={53} value="vacuum" label="Default material" shift />
            <Tool icon="material" label="Material" off />
          </Column>
        </Group>
      </Ribbon>
      <TabStrip>
        {tabs.map((t) => <RibbonTab key={t} $active={t === "Draw"}>{t}</RibbonTab>)}
        <TabStripEnd>
          <button aria-label="Help"><Icon name="help" /></button>
          <button aria-label="ANSYS home"><Icon name="ansys" size={14} /></button>
        </TabStripEnd>
      </TabStrip>

      <Work>
        <Dock>
          <Panel $h={250}>
            <Title>Project Manager</Title>
            <TreeBox $font={treeFont} $size={7} $pad="1px 0 0" role="tree">
              <Branch nodes={project} trail={[]} rowHeight={12} />
            </TreeBox>
          </Panel>
          <HSplit />
          <Panel $bg="#f0f0f2">
            <Title>Properties</Title>
            <PropertyFrame>
              <PropertySheet>
                <PropertyTable>
                  <colgroup>
                    <col width="42" /><col width="68" /><col width="30" /><col width="59" /><col width="8" />
                  </colgroup>
                  <thead>
                    <tr><th>Name</th><th>Value</th><th>Unit</th><th>Evaluated Value</th><th /></tr>
                  </thead>
                  <tbody>
                    {properties.map(([name, value, unit, result]) => (
                      <tr key={name}>
                        <td>{name}</td>
                        <td>{name === "Periodic" ? <Tick type="checkbox" aria-label="Periodic" /> : value}</td>
                        <td>{unit}</td>
                        <td>{result}</td>
                        <td />
                      </tr>
                    ))}
                  </tbody>
                </PropertyTable>
              </PropertySheet>
              <SheetTab>Maxwell2D</SheetTab>
            </PropertyFrame>
          </Panel>
        </Dock>
        <VSplit $w={5} />
        <ModelTree>
          <TreeBox $font={ui} $size={8} $pad="0 0 0 1px" role="tree">
            <Branch nodes={model} trail={[]} rowHeight={12} />
          </TreeBox>
        </ModelTree>
        <View>
          <Scene />
          <TimeBox>Time = -1</TimeBox>
        </View>
      </Work>

      <HSplit />
      <Bottom>
        <MessagePane>
          <Title>Message Manager</Title>
          <TreeBox $font={classic} $size={7} $pad="0 0 0 1px" role="tree">
            <Branch nodes={messages} trail={[]} rowHeight={11} />
          </TreeBox>
        </MessagePane>
        <VSplit $w={4} />
        <Panel>
          <Title>Progress</Title>
        </Panel>
      </Bottom>
      <StatusBar>
        <span>Ready</span>
        <Filler />
        <StatusButton $gap={5}><Icon name="error" size={8} />Hide 3 Messages</StatusButton>
        <StatusButton $gap={3}><Icon name="progress" size={10} />Hide Progress</StatusButton>
      </StatusBar>
    </Window>
  );
}
